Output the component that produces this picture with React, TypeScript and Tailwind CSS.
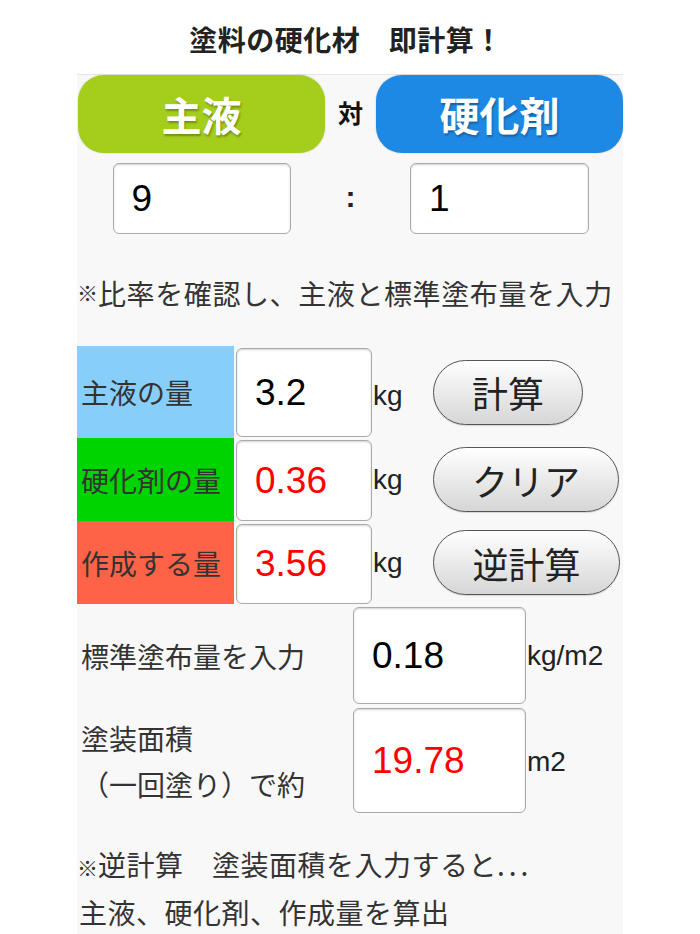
const jp = "font-['Noto_Sans_CJK_JP',sans-serif]";
const num = "font-['Liberation_Sans',Arial,sans-serif]";

function Box({ value, red, className }: { value: string; red?: boolean; className: string }) {
  return (
    <div
      className={`flex items-center rounded-[6px] border border-[#aaaaaa] bg-white pl-[18px] shadow-[inset_0_1px_2px_rgba(0,0,0,0.18)] ${num} text-[37px] ${
        red ? "text-[#ff0000]" : "text-black"
      } ${className}`}
    >
      {value}
    </div>
  );
}

function Pill({ label, className }: { label: string; className: string }) {
  return (
    <button
      className={`flex h-[65px] items-center justify-center self-center rounded-full border border-[#555555] bg-gradient-to-b from-white to-[#d6d6d6] text-[36px] text-[#222] shadow-[0_1px_1px_rgba(0,0,0,0.15)] ${className}`}
    >
      {label}
    </button>
  );
}

function Mark() {
  return <span className="inline-block w-[21px] text-[21px] font-bold tracking-normal">※</span>;
}

function Row({
  label,
  color,
  value,
  red,
  h,
  boxClass,
  unitClass,
  button,
  buttonW,
}: {
  label: string;
  color: string;
  value: string;
  red?: boolean;
  h: string;
  boxClass: string;
  unitClass?: string;
  button: string;
  buttonW: string;
}) {
  return (
    <div className={`flex ${h}`}>
      <div className={`flex w-[157px] items-center pl-[4px] text-[28px] text-[#333] ${color}`}>{label}</div>
      <Box value={value} red={red} className={`ml-[2px] w-[136px] ${boxClass}`} />
      <div className={`ml-[1px] w-[60px] self-center ${num} text-[28px] text-[#222] ${unitClass ?? ""}`}>kg</div>
      <Pill label={button} className={buttonW} />
    </div>
  );
}

export default function App() {
  return (
    <div className={`min-h-[934px] bg-white ${jp} text-[#222]`}>
      <div className="flex h-[74px] items-center justify-center pr-[8px] pt-[4px] text-[28px] font-bold tracking-[0.5px]">
        塗料の硬化材　即計算！
      </div>

      <div className="mx-auto w-[546px] border-t border-[#e6e6e6] bg-[#f8f8f8]">
        {/* 主液 対 硬化剤 */}
        <div className="flex h-[78px] pl-[1px]">
          <div className="flex w-[247px] items-center justify-center rounded-[26px] bg-[#a4cd1c] text-[40px] font-bold text-white shadow-[0_0_2px_rgba(0,0,0,0.2)] [text-shadow:1px_2px_2px_rgba(0,0,0,0.3)]">
            主液
          </div>
          <div className="flex w-[51px] items-center justify-center pb-[2px] text-[25px] font-bold text-[#111]">対</div>
          <div className="flex w-[247px] items-center justify-center rounded-[26px] bg-[#1e89e4] text-[40px] font-bold text-white shadow-[0_0_2px_rgba(0,0,0,0.2)] [text-shadow:1px_2px_2px_rgba(0,0,0,0.3)]">
            硬化剤
          </div>
        </div>

        {/* ratio */}
        <div className="mt-[10px] flex h-[71px] pl-[1px]">
          <div className="flex w-[247px] justify-center">
            <Box value="9" className="h-[71px] w-[178px]" />
          </div>
          <div className={`flex w-[51px] items-center justify-center pb-[4px] ${num} text-[30px] font-bold`}>:</div>
          <div className="flex w-[247px] justify-center">
            <Box value="1" className="h-[71px] w-[179px]" />
          </div>
        </div>

        <div className="flex h-[112px] items-center pt-[6px] text-[28px] tracking-[0.6px] text-[#333]">
          <Mark />
          比率を確認し、主液と標準塗布量を入力
        </div>

        <Row
          label="主液の量"
          color="bg-[#87cefa]"
          value="3.2"
          h="h-[92px]"
          boxClass="mt-[2px] mb-[1px]"
          unitClass="pt-[8px]"
          button="計算"
          buttonW="w-[150px]"
        />
        <Row
          label="硬化剤の量"
          color="bg-[#00d400]"
          value="0.36"
          red
          h="h-[83px]"
          boxClass="mt-[2px]"
          button="クリア"
          buttonW="w-[186px]"
        />
        <Row
          label="作成する量"
          color="bg-[#ff6347]"
          value="3.56"
          red
          h="h-[83px]"
          boxClass="mt-[3px]"
          button="逆計算"
          buttonW="w-[187px]"
        />

        <div className="mt-[3px] flex h-[97px]">
          <div className="flex w-[276px] items-center pl-[4px] text-[28px] text-[#333]">標準塗布量を入力</div>
          <Box value="0.18" className="w-[173px]" />
          <div className={`ml-[1px] self-center ${num} text-[28px] text-[#222]`}>kg/m2</div>
        </div>

        <div className="mt-[4px] flex h-[105px]">
          <div className="flex w-[276px] flex-col justify-center pl-[4px] text-[28px] leading-[46px] text-[#333]">
            <div>塗装面積</div>
            <div>（一回塗り）で約</div>
          </div>
          <Box value="19.78" red className="w-[173px]" />
          <div className={`ml-[1px] self-center pt-[3px] ${num} text-[28px] text-[#222]`}>m2</div>
        </div>

        <div className="mt-[29px] text-[28px] leading-[45px] tracking-[0.5px] text-[#333]">
          <div>
            <Mark />
            逆計算　塗装面積を入力すると<span className="tracking-[4px]">...</span>
          </div>
          <div className="pl-[2px]">主液、硬化剤、作成量を算出</div>
        </div>
      </div>
    </div>
  );
}
